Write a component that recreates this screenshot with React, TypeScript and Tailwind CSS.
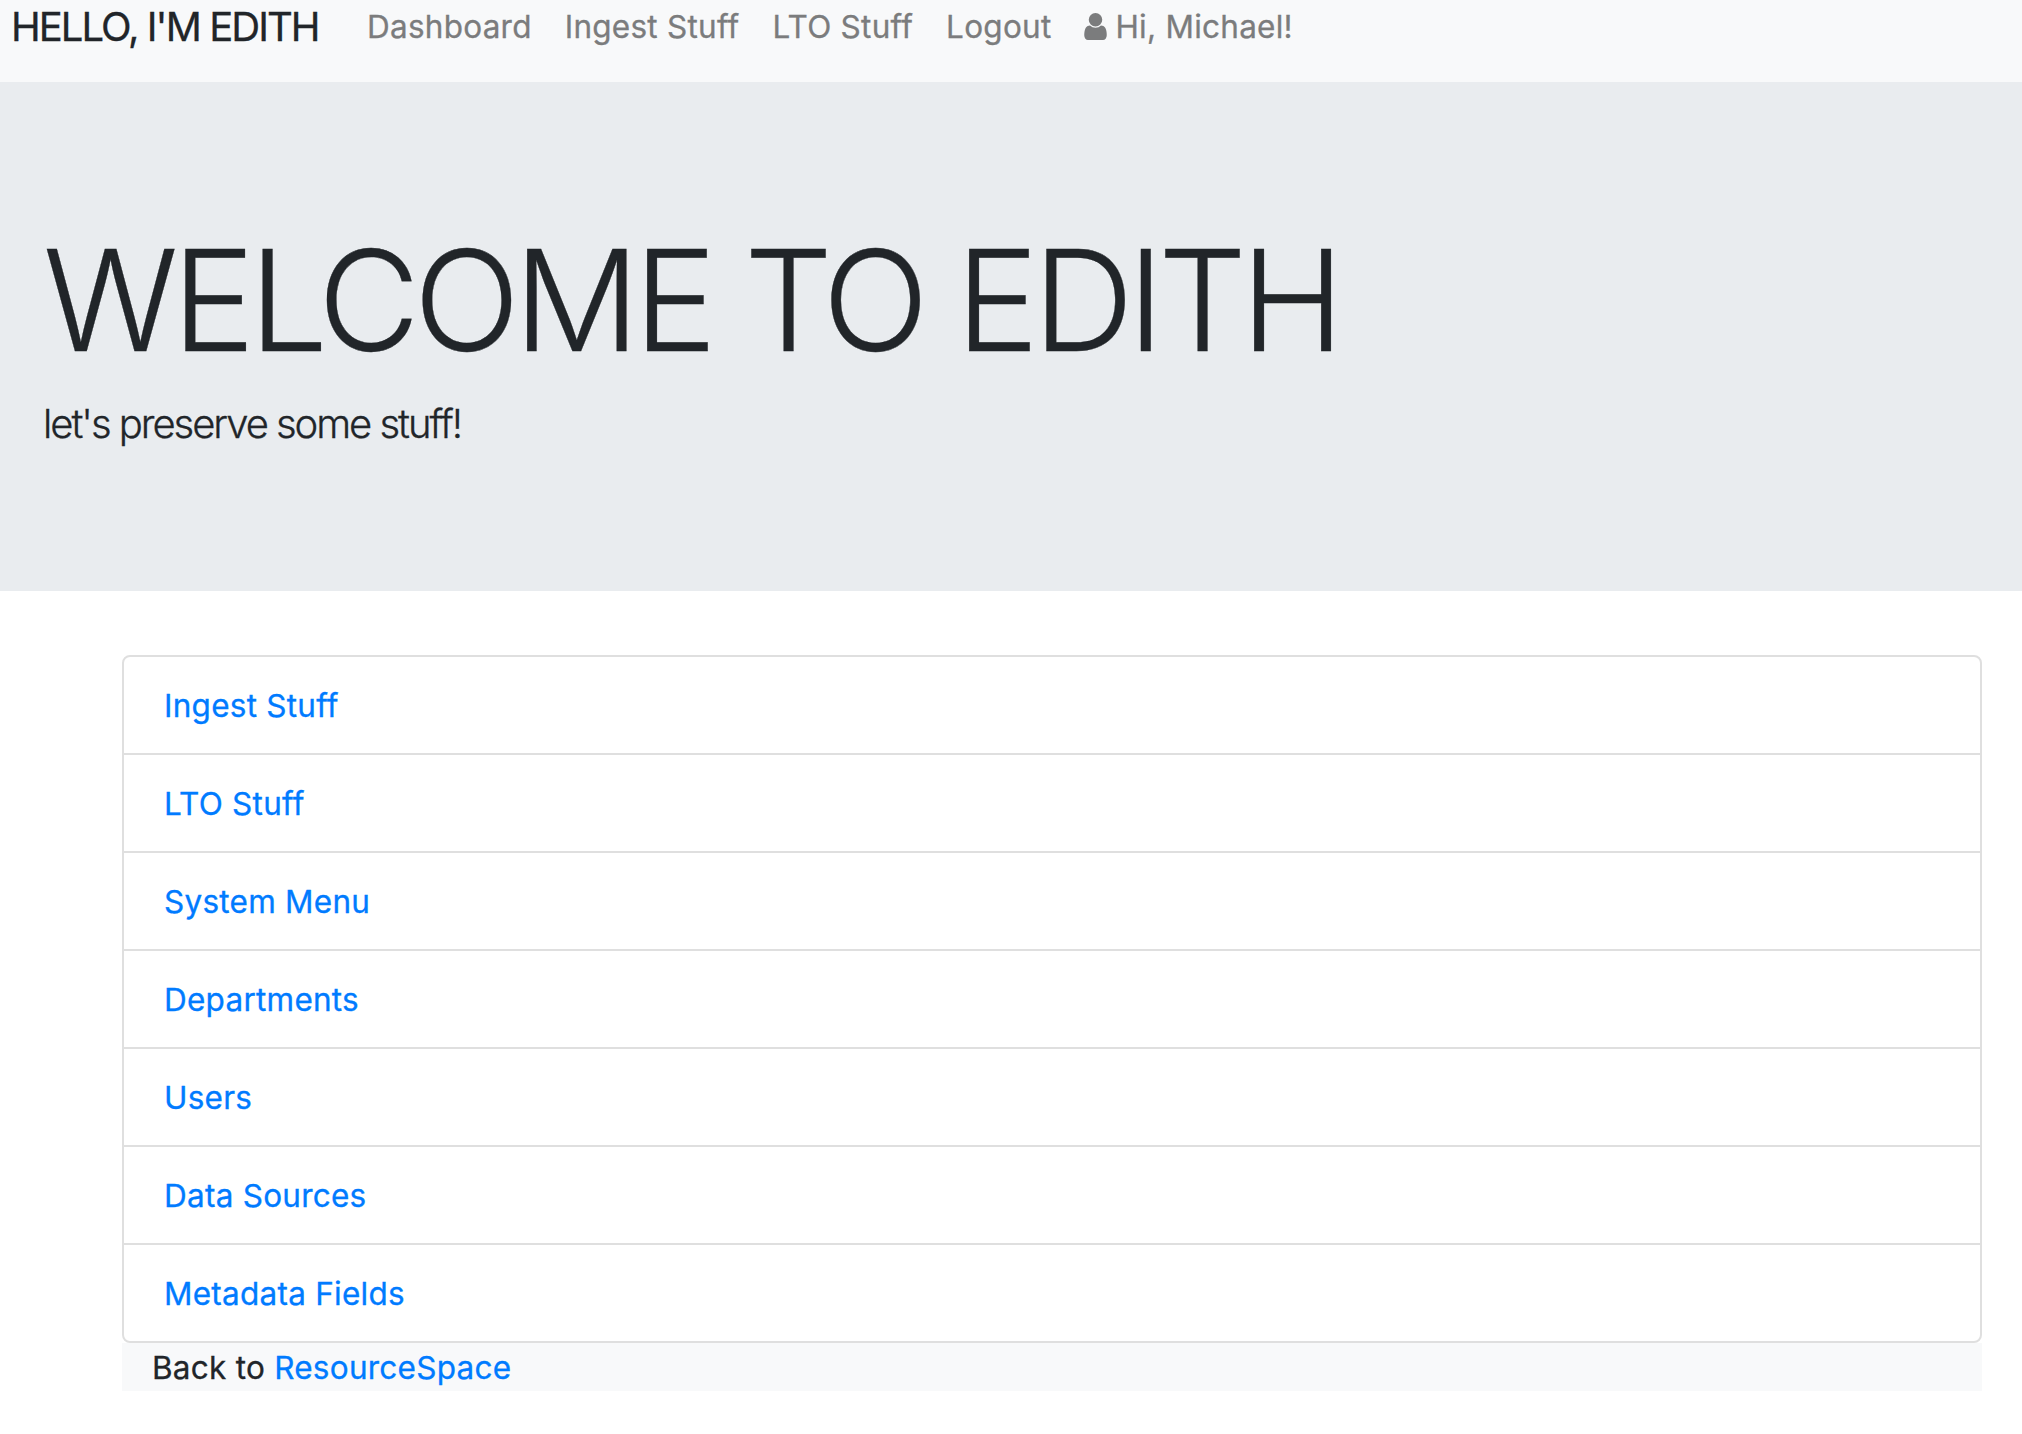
const nav = ["Dashboard", "Ingest Stuff", "LTO Stuff", "Logout"];
const items = ["Ingest Stuff", "LTO Stuff", "System Menu", "Departments", "Users", "Data Sources", "Metadata Fields"];

function UserIcon() {
  return (
    <svg viewBox="0 128 1280 1536" className="mt-[10px] h-[27px] w-[23px]" fill="currentColor">
      <path d="M1280 1399q0 109-62.500 187t-150.500 78h-854q-88 0-150.500-78t-62.500-187q0-85 8.500-160.500t31.500-152 58.500-131 94-89 134.500-34.500q131 128 313 128t313-128q76 0 134.500 34.500t94 89 58.500 131 31.500 152 8.500 160.500zm-256-887q0 159-112.500 271.500t-271.500 112.500-271.500-112.500-112.500-271.500 112.500-271.500 271.500-112.500 271.500 112.500 112.500 271.500z" />
    </svg>
  );
}

export default function App() {
  return (
    <div className="min-h-[1434px] bg-white font-['Inter',sans-serif] text-[31.5px] leading-[48px] tracking-[0.25px] text-[#212529] [-webkit-text-stroke:0.3px]">
      <nav className="flex h-[82px] items-start bg-[#f8f9fa] pl-[11px] pt-[3px]">
        <a className="w-[356px] whitespace-nowrap text-[40px] tracking-[-1.95px]">HELLO, I'M EDITH</a>
        <div className="flex gap-[33px] text-[#7b7c7d]">
          {nav.map((n) => (
            <a key={n}>{n}</a>
          ))}
          <a className="flex items-start gap-2">
            <UserIcon />
            <span>Hi, Michael!</span>
          </a>
        </div>
      </nav>
      <header className="h-[509px] bg-[#e9ecef] px-[43px] pt-[132px]">
        <h1 className="text-[140px] font-light leading-[173px] tracking-[-6.2px]">WELCOME TO EDITH</h1>
        <p className="mt-[7px] text-[40px] font-light leading-[60px] tracking-[-2.05px]">let's preserve some stuff!</p>
      </header>
      <main className="ml-[122px] mr-[40px] pt-16">
        <ul className="divide-y-2 divide-[#dfdfdf] rounded-lg border-2 border-[#dfdfdf]">
          {items.map((n) => (
            <li key={n} className="h-[98px] px-10 pt-[25px] text-[#007bff] last:h-24">
              <a>{n}</a>
            </li>
          ))}
        </ul>
        <footer className="h-12 bg-[#f8f9fa] pl-[30px] pt-px">
          Back to <a className="text-[#007bff]">ResourceSpace</a>
        </footer>
      </main>
    </div>
  );
}
